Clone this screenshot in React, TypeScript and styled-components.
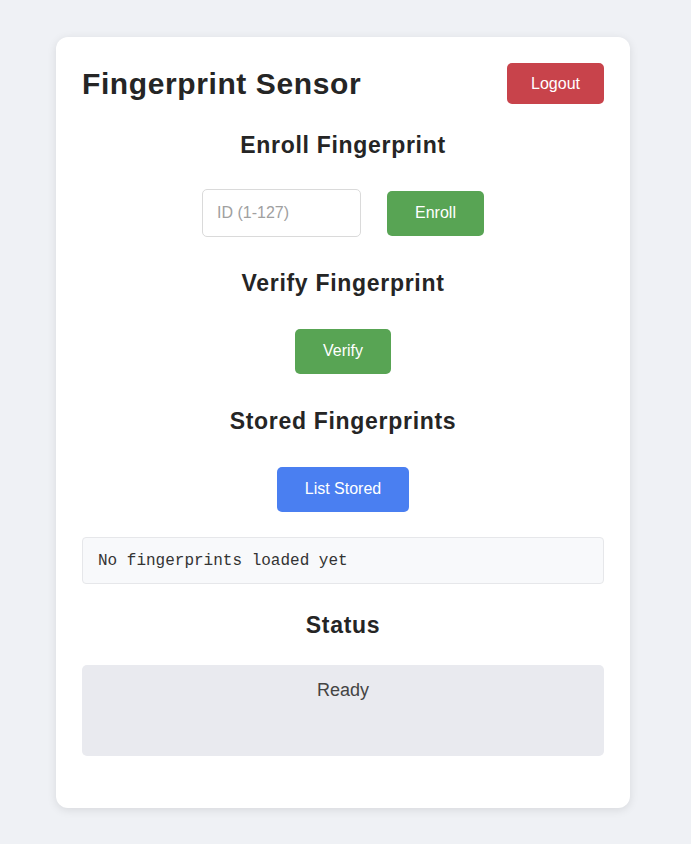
import React from 'react';
import styled, { createGlobalStyle } from 'styled-components';

const GlobalStyle = createGlobalStyle`
    html, body {
        margin: 0;
        padding: 0;
        background-color: #eff1f5;
        font-family: "Liberation Sans", Arial, sans-serif;
    }
`;

const Page = styled.div`
    min-height: 844px;
    padding: 37px 0 0 56px;
    box-sizing: border-box;
`;

const Card = styled.div`
    width: 574px;
    box-sizing: border-box;
    padding: 26px 26px 52px;
    background-color: #ffffff;
    border-radius: 12px;
    box-shadow: 0 2px 10px rgba(0, 0, 0, 0.1);
`;

const Header = styled.div`
    display: flex;
    justify-content: space-between;
    align-items: center;
    margin-bottom: 28px;

    h1 {
        margin: 0;
        font-size: 30px;
        letter-spacing: 0.6px;
        font-weight: 700;
        color: #252525;
    }
`;

const Heading = styled.h2<{ $after?: number }>`
    margin: 0 0 ${(p) => p.$after ?? 31}px;
    font-size: 23px;
    line-height: 26px;
    letter-spacing: 0.7px;
    font-weight: 700;
    text-align: center;
    color: #252525;
`;

const Row = styled.div<{ $after?: number }>`
    display: flex;
    justify-content: center;
    align-items: center;
    gap: 26px;
    min-height: 48px;
    margin-bottom: ${(p) => p.$after ?? 33}px;
`;

const colors = {
    red: '#c8434b',
    green: '#58a454',
    blue: '#4a7ff1',
};

const Button = styled.button<{ $tone: keyof typeof colors; $compact?: boolean }>`
    height: ${(p) => (p.$compact ? 41 : 45)}px;
    padding: 0 ${(p) => (p.$compact ? 24 : 28)}px;
    border: none;
    border-radius: 5px;
    background-color: ${(p) => colors[p.$tone]};
    color: #ffffff;
    font-family: "Liberation Sans", Arial, sans-serif;
    font-size: 16px;
    cursor: pointer;
`;

const Input = styled.input`
    width: 159px;
    height: 48px;
    box-sizing: border-box;
    padding: 0 14px;
    border: 1px solid #dadada;
    border-radius: 5px;
    font-family: "Liberation Sans", Arial, sans-serif;
    font-size: 16px;
    color: #333;

    &::placeholder { color: #a0a0a0; }
`;

const ListBox = styled.div`
    height: 47px;
    box-sizing: border-box;
    display: flex;
    align-items: center;
    padding: 0 15px;
    margin-bottom: 28px;
    background-color: #f8f9fb;
    border: 1px solid #e6e7ea;
    border-radius: 4px;
    font-family: "Liberation Mono", "DejaVu Sans Mono", monospace;
    font-size: 16px;
    color: #333;
`;

const StatusBox = styled.div`
    height: 91px;
    box-sizing: border-box;
    padding-top: 14px;
    background-color: #e9eaef;
    border-radius: 5px;
    text-align: center;
    font-size: 18px;
    line-height: 22px;
    color: #444;
`;

export default function App() {
    return (
        <>
            <GlobalStyle />
            <Page>
                <Card>
                    <Header>
                        <h1>Fingerprint Sensor</h1>
                        <Button $tone="red" $compact>Logout</Button>
                    </Header>

                    <Heading>Enroll Fingerprint</Heading>
                    <Row>
                        <Input placeholder="ID (1-127)" />
                        <Button $tone="green">Enroll</Button>
                    </Row>

                    <Heading>Verify Fingerprint</Heading>
                    <Row>
                        <Button $tone="green">Verify</Button>
                    </Row>

                    <Heading>Stored Fingerprints</Heading>
                    <Row $after={24}>
                        <Button $tone="blue">List Stored</Button>
                    </Row>
                    <ListBox>No fingerprints loaded yet</ListBox>

                    <Heading $after={27}>Status</Heading>
                    <StatusBox>Ready</StatusBox>
                </Card>
            </Page>
        </>
    );
}
